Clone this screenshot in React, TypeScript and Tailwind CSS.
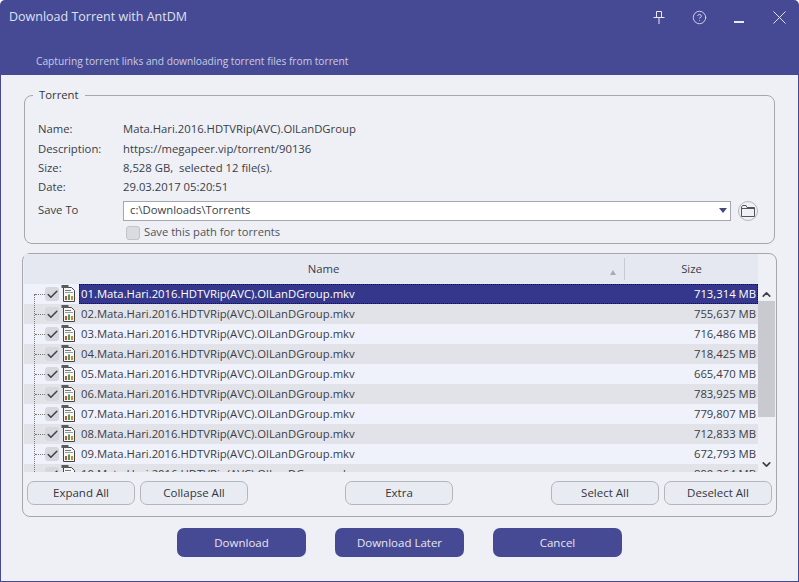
import { Check, ChevronDown, ChevronUp, CircleHelp, X } from "lucide-react";

const files = [
  ["01", "713,314 MB"],
  ["02", "755,637 MB"],
  ["03", "716,486 MB"],
  ["04", "718,425 MB"],
  ["05", "665,470 MB"],
  ["06", "783,925 MB"],
  ["07", "779,807 MB"],
  ["08", "712,833 MB"],
  ["09", "672,793 MB"],
  ["10", "890,264 MB"],
];

const info = [
  ["Name:", "Mata.Hari.2016.HDTVRip(AVC).OlLanDGroup"],
  ["Description:", "https://megapeer.vip/torrent/90136"],
  ["Size:", "8,528 GB,  selected 12 file(s)."],
  ["Date:", "29.03.2017 05:20:51"],
];

function FileIcon() {
  return (
    <svg width="15" height="18" viewBox="0 0 15 18" className="shrink-0">
      <path d="M2.5 3.5h8l3 3v11h-11z" fill="#f7f7f7" stroke="#444" />
      <rect x="0.5" y="1" width="7" height="3" fill="#5a5a5a" />
      <rect x="4" y="6" width="6" height="1" fill="#777" />
      <rect x="4" y="8" width="8" height="1" fill="#999" />
      <rect x="4" y="12" width="2" height="4" fill="#c0503b" />
      <rect x="7" y="10.5" width="2" height="5.5" fill="#4a9c4f" />
      <rect x="10" y="12" width="2" height="4" fill="#c98a3a" />
    </svg>
  );
}

function FileRow({ no, size, index }: { no: string; size: string; index: number }) {
  const selected = index === 0;
  return (
    <div className={`flex h-5 shrink-0 items-center ${index % 2 === 1 ? "bg-[#e2e3e9]" : "bg-[#f0f2fb]"}`}>
      <span className="ml-[11px] w-[10px] shrink-0 border-t border-dotted border-[#777]" />
      <span className="grid size-[14px] shrink-0 place-items-center rounded-[3px] bg-[#d6d8de]">
        <Check size={13} strokeWidth={2.8} className="text-[#3d4048]" />
      </span>
      <span className="ml-[2px] mt-[-2px]">
        <FileIcon />
      </span>
      <div
        className={`ml-[3px] flex h-5 min-w-0 flex-1 items-center justify-between border border-dotted pl-px pr-px ${
          selected ? "border-[#11123f] bg-[#35378c] text-white" : "border-transparent"
        }`}
      >
        <span>{no}.Mata.Hari.2016.HDTVRip(AVC).OlLanDGroup.mkv</span>
        <span>{size}</span>
      </div>
    </div>
  );
}

function SmallButton({ label }: { label: string }) {
  return (
    <button className="h-6 w-[108px] rounded-[7px] border border-[#b4b6bd] bg-[#e9ebf2] text-[11.5px] text-[#33363d]">
      {label}
    </button>
  );
}

function MainButton({ label }: { label: string }) {
  return (
    <button className="h-[29px] w-[129px] rounded-[7px] bg-[#464a94] text-[11.5px] text-[#e6e7f3]">{label}</button>
  );
}

export default function App() {
  return (
    <div className="flex h-[582px] w-[799px] flex-col overflow-hidden rounded-t-[5px] bg-[#eef0f6] font-['Open_Sans','Noto_Sans',sans-serif] text-[11.3px] text-[#3a3d46]">
      <header className="h-[75px] shrink-0 bg-[#464a94] text-[#dfe1f1]">
        <div className="flex h-[35px] items-center pl-[9px]">
          <span className="text-[12.5px]">Download Torrent with AntDM</span>
          <div className="ml-auto flex items-center text-[#e8e9f5]">
            <span className="grid w-10 place-items-center">
              <svg width="12" height="13" viewBox="0 0 12 13" fill="none" stroke="currentColor">
                <path d="M3.5 .5h5v6h-5z" />
                <path d="M.5 6.5h11M6 7v6" />
              </svg>
            </span>
            <span className="grid w-10 place-items-center">
              <CircleHelp size={15} strokeWidth={1.3} />
            </span>
            <span className="grid w-10 place-items-center">
              <svg width="10" height="14" viewBox="0 0 10 14" fill="currentColor">
                <rect y="10" width="10" height="2" />
              </svg>
            </span>
            <span className="grid w-10 place-items-center">
              <X size={23} strokeWidth={1} />
            </span>
          </div>
        </div>
        <p className="mt-[18px] pl-[36px] text-[10.2px] leading-4 text-[#c9cbe4]">
          Capturing torrent links and downloading torrent files from torrent
        </p>
      </header>

      <main className="flex flex-1 flex-col border-x border-b border-[#464a94] px-[21px]">
        <section className="relative mx-[2px] mt-[20px] h-[149px] shrink-0 rounded-[8px] border border-[#a5a7ae] pl-[13px] pr-[16px] pt-[24px]">
          <span className="absolute left-[8px] top-[-9px] bg-[#eef0f6] px-[6px] leading-4 text-[#33363d]">Torrent</span>
          {info.map(([label, value]) => (
            <div key={label} className="flex h-[19.4px] items-center">
              <span className="w-[85px] shrink-0">{label}</span>
              <span className="whitespace-pre">{value}</span>
            </div>
          ))}
          <div className="mt-[3px] flex h-[20px] items-center">
            <span className="w-[85px] shrink-0">Save To</span>
            <div className="flex h-[20px] w-[608px] items-center justify-between border border-[#a5a7ae] bg-white pl-[6px] pr-[3px]">
              <span>c:\Downloads\Torrents</span>
              <span className="h-0 w-0 border-x-[4px] border-t-[5px] border-x-transparent border-t-[#45497f]" />
            </div>
            <span className="ml-[7px] grid size-[20px] shrink-0 place-items-center rounded-full border border-[#b4b6bd]">
              <svg width="14" height="12" viewBox="0 0 14 12" fill="none" stroke="#50535b">
                <path d="M.5 2V11.5H13.5V2.5H6L5 .5H1.5z" />
                <path d="M.5 3.5H13.5" />
              </svg>
            </span>
          </div>
          <div className="mt-[4px] flex h-[16px] items-center pl-[88px]">
            <span className="size-[14px] rounded-[3px] border border-[#c2c4ca] bg-[#d9dbe1]" />
            <span className="ml-[4px] text-[11.2px] text-[#50535b]">Save this path for torrents</span>
          </div>
        </section>

        <section className="mt-[9px] flex h-[264px] shrink-0 flex-col rounded-[8px] border border-[#a5a7ae] pl-px pr-px">
          <div className="flex h-[30px] shrink-0 items-center pr-[17px]">
            <div className="relative flex h-full flex-1 items-center justify-center bg-[#e5e8f1] pl-px">
              <span className="mr-[2px]">Name</span>
              <span className="absolute right-[8px] top-[16px] h-0 w-0 border-x-[3px] border-b-[5px] border-x-transparent border-b-[#a9abb4]" />
            </div>
            <div className="flex h-full w-[134px] items-center bg-[#e5e8f1]">
              <span className="h-[22px] w-px shrink-0 bg-[#c8cad2]" />
              <span className="flex-1 text-center">Size</span>
            </div>
          </div>
          <div className="flex h-[188px] shrink-0 overflow-hidden">
            <div className="relative flex min-w-0 flex-1 flex-col">
              <span className="absolute bottom-0 left-[10px] top-[10px] z-10 border-l border-dotted border-[#777]" />
              {files.map(([no, size], i) => (
                <FileRow key={no} no={no} size={size} index={i} />
              ))}
            </div>
            <div className="flex w-[17px] shrink-0 flex-col items-center">
              <ChevronUp size={13} strokeWidth={3} className="mt-[4px] h-[13px] shrink-0 text-[#3a3d46]" />
              <div className="h-[116px] w-full shrink-0 bg-[#c9cad0]" />
              <ChevronDown size={13} strokeWidth={3} className="mt-[41px] shrink-0 text-[#3a3d46]" />
            </div>
          </div>
          <div className="mt-[9px] flex items-center pl-[3px]">
            <div className="flex gap-[5px]">
              <SmallButton label="Expand All" />
              <SmallButton label="Collapse All" />
            </div>
            <div className="ml-[97px]">
              <SmallButton label="Extra" />
            </div>
            <div className="ml-[98px] flex gap-[5px]">
              <SmallButton label="Select All" />
              <SmallButton label="Deselect All" />
            </div>
          </div>
        </section>

        <div className="mt-[11px] flex justify-center gap-[29px]">
          <MainButton label="Download" />
          <MainButton label="Download Later" />
          <MainButton label="Cancel" />
        </div>
      </main>
    </div>
  );
}
